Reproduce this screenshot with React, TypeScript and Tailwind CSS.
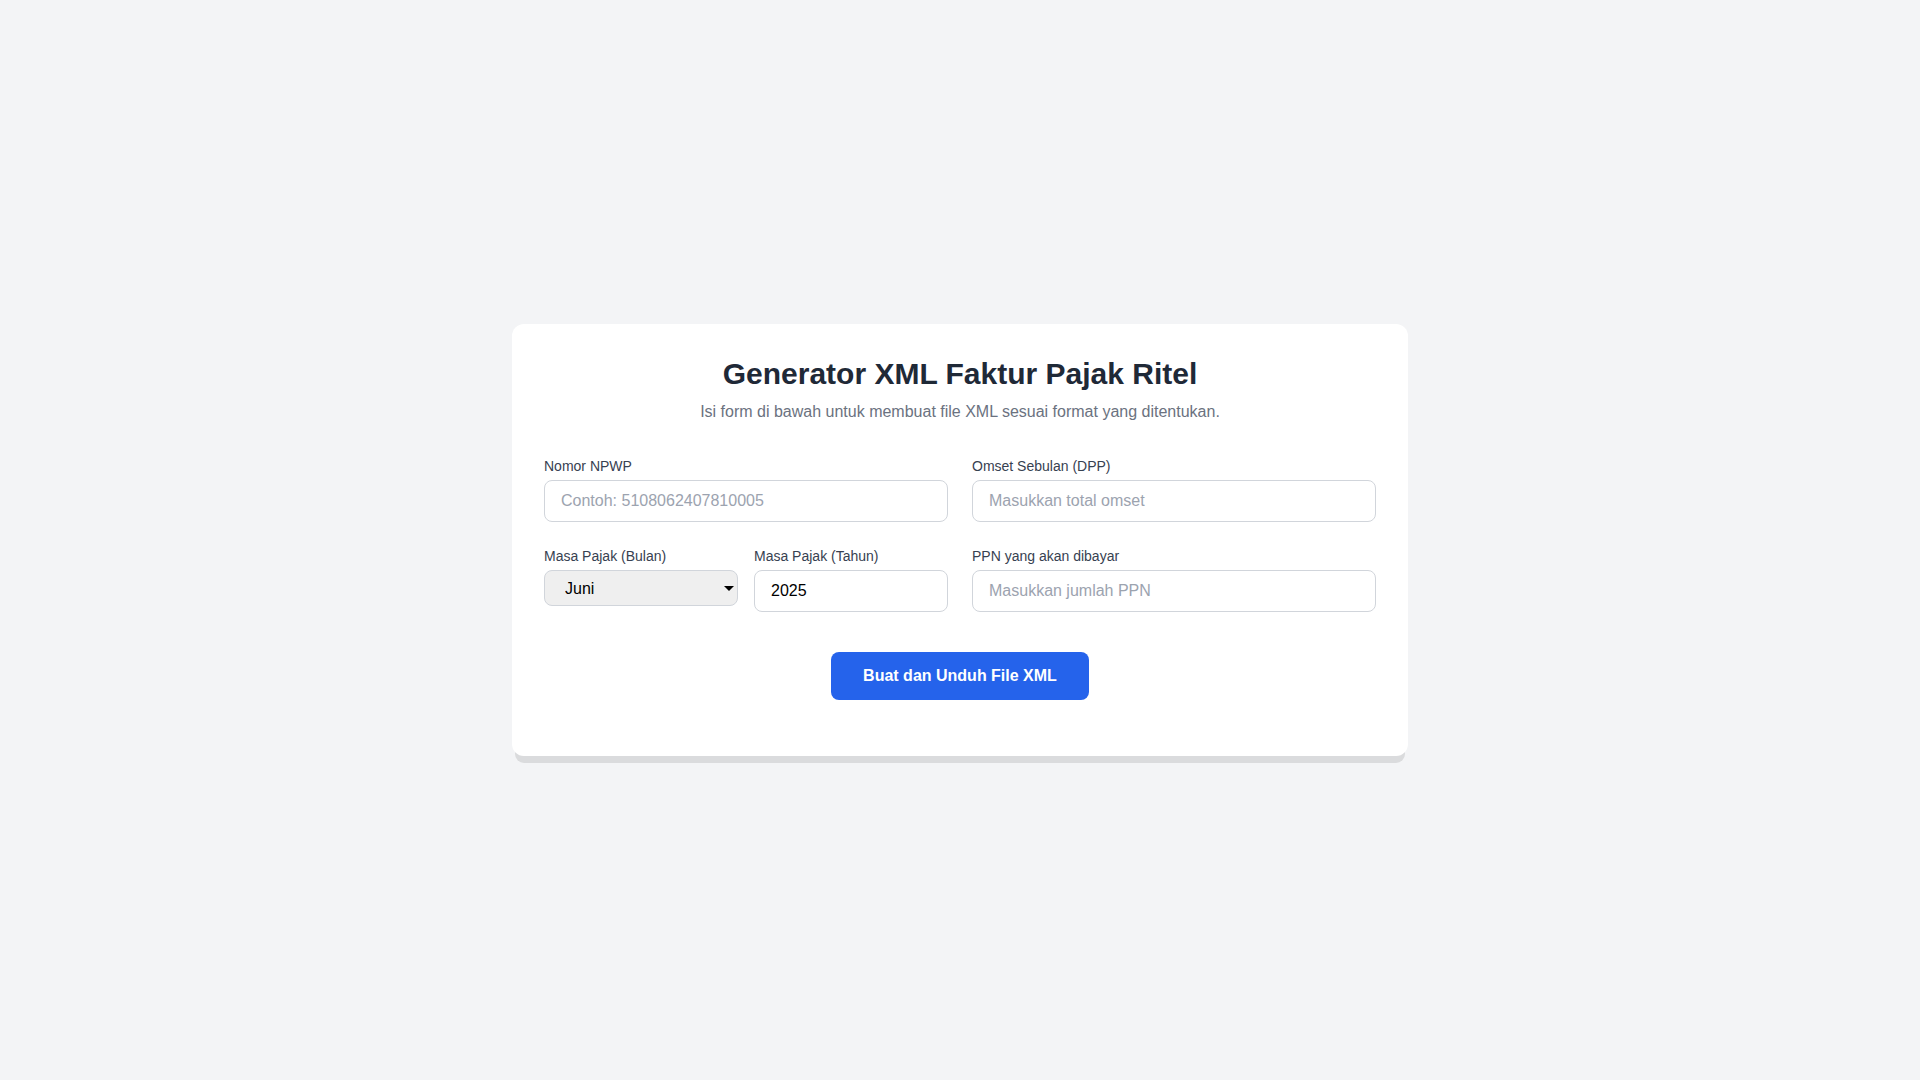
import React from "react";

export default function App() {
  const months = [
    "Januari", "Februari", "Maret", "April", "Mei", "Juni",
    "Juli", "Agustus", "September", "Oktober", "November", "Desember",
  ];
  return (
    <div
      className="min-h-screen bg-[#f3f4f6] flex items-center justify-center"
      style={{ fontFamily: '"Liberation Sans", Arial, sans-serif' }}
    >
      <div className="w-[896px] bg-white rounded-xl shadow-[0_10px_0_-3px_rgba(0,0,0,0.1)] px-8 pt-8 pb-14">
        <div className="text-center mb-8">
          <h1 className="text-3xl font-bold text-[#1f2937]">Generator XML Faktur Pajak Ritel</h1>
          <p className="mt-2 text-base text-[#6b7280]">
            Isi form di bawah untuk membuat file XML sesuai format yang ditentukan.
          </p>
        </div>
        <div className="grid grid-cols-2 gap-x-6 gap-y-6">
          <div>
            <label className="block text-sm text-[#374151] mb-1">Nomor NPWP</label>
            <input
              className="w-full h-[42px] px-4 border border-[#d1d5db] rounded-lg text-base text-black placeholder:text-[#9ca3af] outline-none"
              placeholder="Contoh: 5108062407810005"
            />
          </div>
          <div>
            <label className="block text-sm text-[#374151] mb-1">Omset Sebulan (DPP)</label>
            <input
              className="w-full h-[42px] px-4 border border-[#d1d5db] rounded-lg text-base text-black placeholder:text-[#9ca3af] outline-none"
              placeholder="Masukkan total omset"
            />
          </div>
          <div className="grid grid-cols-2 gap-4">
            <div>
              <label className="block text-sm text-[#374151] mb-1">Masa Pajak (Bulan)</label>
              <div className="relative">
                <select
                  defaultValue="Juni"
                  className="w-full h-9 pl-5 pr-8 pt-px appearance-none bg-[#efefef] border border-[#d1d5db] rounded-lg text-base text-black outline-none"
                >
                  {months.map((m) => (
                    <option key={m} value={m}>{m}</option>
                  ))}
                </select>
                <svg
                  className="absolute right-[4px] top-[16px] pointer-events-none"
                  width="10"
                  height="5"
                  viewBox="0 0 10 5"
                >
                  <path d="M0 0 L10 0 L5 5 Z" fill="#000" />
                </svg>
              </div>
            </div>
            <div>
              <label className="block text-sm text-[#374151] mb-1">Masa Pajak (Tahun)</label>
              <input
                className="w-full h-[42px] px-4 border border-[#d1d5db] rounded-lg text-base text-black outline-none"
                defaultValue="2025"
              />
            </div>
          </div>
          <div>
            <label className="block text-sm text-[#374151] mb-1">PPN yang akan dibayar</label>
            <input
              className="w-full h-[42px] px-4 border border-[#d1d5db] rounded-lg text-base text-black placeholder:text-[#9ca3af] outline-none"
              placeholder="Masukkan jumlah PPN"
            />
          </div>
        </div>
        <div className="mt-10 flex justify-center">
          <button className="px-8 py-3 bg-[#2563eb] text-white font-bold text-base rounded-lg">
            Buat dan Unduh File XML
          </button>
        </div>
      </div>
    </div>
  );
}
